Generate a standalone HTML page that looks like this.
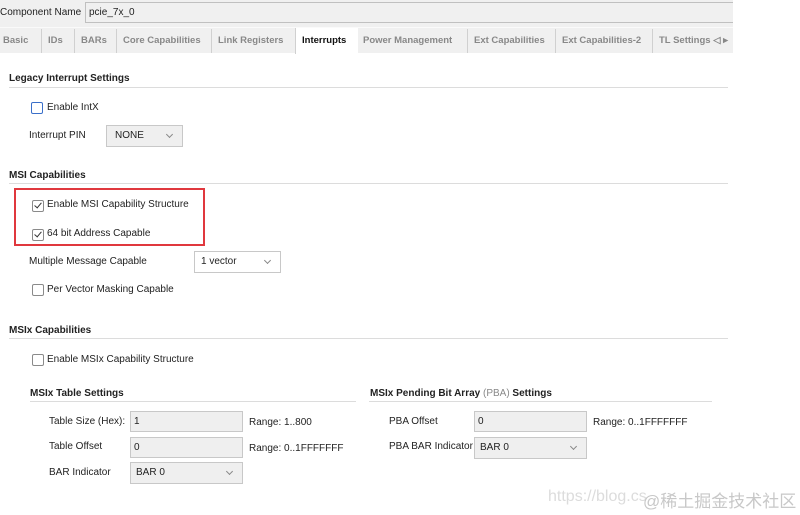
<!DOCTYPE html>
<html><head><style>
body{margin:0;width:800px;height:515px;background:#fff;position:relative;overflow:hidden;font-family:"Liberation Sans",Arial,sans-serif;font-size:10px;color:#222}
.a{position:absolute;white-space:nowrap}
.b{font-weight:bold}
.line{position:absolute;height:1px;background:#dcdcdc}
.cb{position:absolute;width:10px;height:10px;border:1px solid #8a8a8a;border-radius:2px;background:#fff}
.cb.chk::after{content:"";position:absolute;left:3px;top:0px;width:3px;height:6px;border:solid #333;border-width:0 1.5px 1.5px 0;transform:rotate(40deg)}
.in{position:absolute;background:#efefef;border:1px solid #c8c8c8;box-sizing:border-box;padding-left:3px;line-height:19px}
.dd{position:absolute;background:#efefef;border:1px solid #c8c8c8;box-sizing:border-box;padding-left:8px;line-height:20px}
.dd::after{content:"";position:absolute;right:10px;top:6px;width:4px;height:4px;border:solid #888;border-width:0 1px 1px 0;transform:rotate(45deg)}
.tab{position:absolute;top:29px;height:24px;line-height:24px;color:#888;font-weight:bold;font-size:9.5px;border-left:1px solid #d0d0d0;padding-left:6px}
</style></head><body>
<div class="a" style="left:0;top:0;width:733px;height:53px;background:#f0f0f0"></div>
<div class="a" style="left:0;top:7px">Component Name</div>
<div class="in" style="left:85px;top:2px;width:648px;height:21px;background:#f0f0f0;border-color:#c0c0c0;border-right:none;line-height:20px">pcie_7x_0</div>
<div class="a" style="left:0;top:27px;width:733px;height:1px;background:#fafafa"></div>
<div class="tab" style="left:-2px;border:none;padding-left:5px">Basic</div>
<div class="tab" style="left:41px">IDs</div>
<div class="tab" style="left:74px">BARs</div>
<div class="tab" style="left:116px">Core Capabilities</div>
<div class="tab" style="left:211px">Link Registers</div>
<div class="a" style="left:295px;top:28px;width:62px;height:26px;background:#fff;border-left:1px solid #d0d0d0"></div>
<div class="tab" style="left:295px;color:#111;border-left:1px solid #d0d0d0">Interrupts</div>
<div class="tab" style="left:357px;border:none">Power Management</div>
<div class="tab" style="left:467px">Ext Capabilities</div>
<div class="tab" style="left:555px">Ext Capabilities-2</div>
<div class="tab" style="left:652px">TL Settings ◁ ▸</div>

<div class="a b" style="left:9px;top:73px">Legacy Interrupt Settings</div>
<div class="line" style="left:9px;top:87px;width:719px"></div>
<div class="cb" style="left:31px;top:102px;border-color:#3a6fc9;border-width:1.5px"></div>
<div class="a" style="left:47px;top:102px">Enable IntX</div>
<div class="a" style="left:29px;top:130px">Interrupt PIN</div>
<div class="dd" style="left:106px;top:125px;width:77px;height:22px">NONE</div>

<div class="a b" style="left:9px;top:170px">MSI Capabilities</div>
<div class="line" style="left:9px;top:183px;width:719px"></div>
<div class="a" style="left:14px;top:188px;width:187px;height:54px;border:2px solid #e0383e"></div>
<div class="cb chk" style="left:32px;top:200px"></div>
<div class="a" style="left:47px;top:199px">Enable MSI Capability Structure</div>
<div class="cb chk" style="left:32px;top:229px"></div>
<div class="a" style="left:47px;top:228px">64 bit Address Capable</div>
<div class="a" style="left:29px;top:256px">Multiple Message Capable</div>
<div class="dd" style="left:194px;top:251px;width:87px;height:22px;background:#fff;padding-left:6px">1 vector</div>
<div class="cb" style="left:32px;top:284px"></div>
<div class="a" style="left:47px;top:284px">Per Vector Masking Capable</div>

<div class="a b" style="left:9px;top:325px">MSIx Capabilities</div>
<div class="line" style="left:9px;top:338px;width:719px"></div>
<div class="cb" style="left:32px;top:354px"></div>
<div class="a" style="left:47px;top:354px">Enable MSIx Capability Structure</div>

<div class="a b" style="left:30px;top:388px">MSIx Table Settings</div>
<div class="line" style="left:30px;top:401px;width:326px"></div>
<div class="a" style="left:49px;top:416px">Table Size (Hex):</div>
<div class="in" style="left:130px;top:411px;width:113px;height:21px;line-height:20px">1</div>
<div class="a" style="left:249px;top:417px">Range: 1..800</div>
<div class="a" style="left:49px;top:441px">Table Offset</div>
<div class="in" style="left:130px;top:437px;width:113px;height:21px;line-height:20px">0</div>
<div class="a" style="left:249px;top:443px">Range: 0..1FFFFFFF</div>
<div class="a" style="left:49px;top:467px">BAR Indicator</div>
<div class="dd" style="left:130px;top:462px;width:113px;height:22px;padding-left:5px">BAR 0</div>

<div class="a b" style="left:370px;top:388px">MSIx Pending Bit Array <span style="color:#888;font-weight:normal">(PBA)</span> Settings</div>
<div class="line" style="left:369px;top:401px;width:343px"></div>
<div class="a" style="left:389px;top:416px">PBA Offset</div>
<div class="in" style="left:474px;top:411px;width:113px;height:21px;line-height:20px">0</div>
<div class="a" style="left:593px;top:417px">Range: 0..1FFFFFFF</div>
<div class="a" style="left:389px;top:441px">PBA BAR Indicator</div>
<div class="dd" style="left:474px;top:437px;width:113px;height:22px;padding-left:5px">BAR 0</div>

<div class="a" style="left:548px;top:488px;font-size:16px;color:#dcdcdc">https://blog.cs</div>
<div class="a" style="left:643px;top:487px;font-size:17px;color:#c8c8c8;font-family:'Liberation Sans','Noto Sans CJK SC',sans-serif">@稀土掘金技术社区</div>
</body></html>
